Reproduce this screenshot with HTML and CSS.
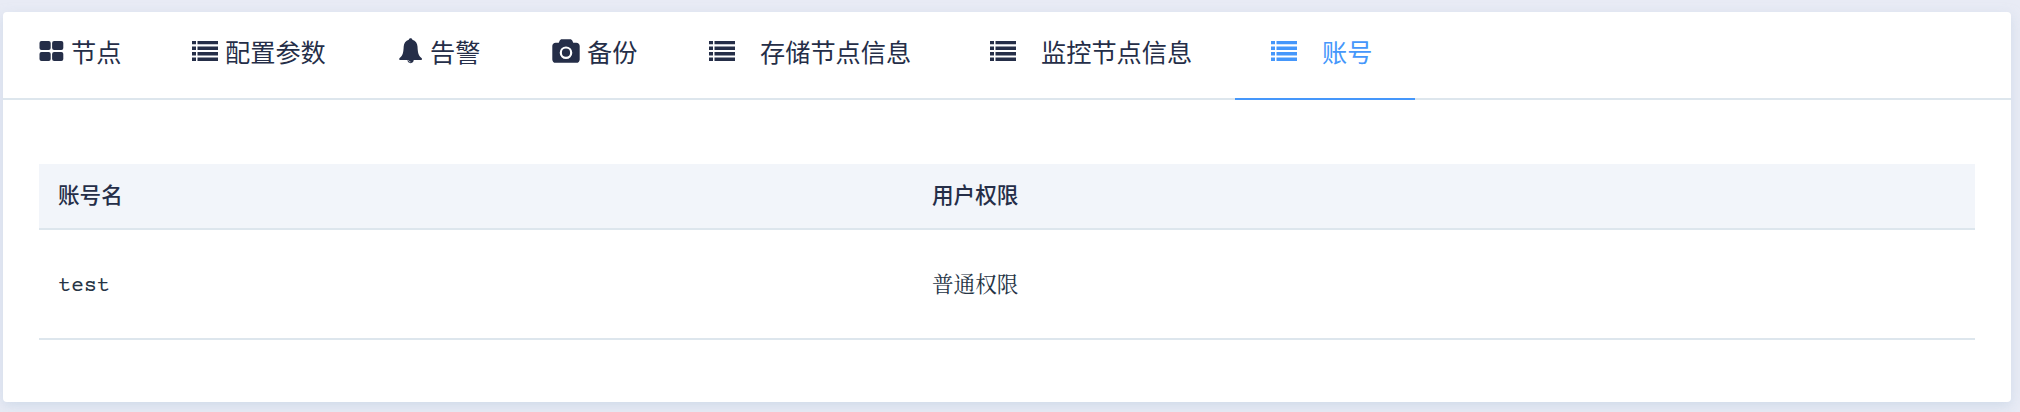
FILE: index.html
```html
<!DOCTYPE html>
<html lang="zh-CN">
<head>
<meta charset="utf-8">
<title>账号</title>
<link rel="stylesheet" href="styles.css">
</head>
<body>
<svg width="0" height="0" class="defs">
  <symbol id="list" viewBox="0 0 26 20">
    <path d="M0 0h4v3.3H0zM5.5 0H26v3.3H5.5zM0 5.4h4v3.5H0zM5.5 5.4H26v3.5H5.5zM0 11h4v3.4H0zM5.5 11H26v3.4H5.5zM0 16.4h4V20H0zM5.5 16.4H26V20H5.5z"/>
  </symbol>
</svg>
<main class="card">
  <nav class="tabs">
    <a class="tab tab-nodes">
      <svg class="icon" width="25" height="20" viewBox="0 0 25 20"><rect x=".5" width="11.2" height="9.1" rx="2"/><rect x="13.1" width="11.2" height="9.1" rx="2"/><rect x=".5" y="10.9" width="11.2" height="9.1" rx="2"/><rect x="13.1" y="10.9" width="11.2" height="9.1" rx="2"/></svg>
      <span>节点</span>
    </a>
    <a class="tab tab-config"><svg class="icon" width="26" height="20"><use href="#list"/></svg><span>配置参数</span></a>
    <a class="tab tab-alarm">
      <svg class="icon" width="24" height="26" viewBox="0.4 0 24 26"><path d="M12 .3c1 0 1.700.6 1.800 1.500 3.200.9 4.900 3.400 5.100 6.700.3 5.500.7 9.300 4 11.500.9.700.5 1.900-.5 1.900h-7.300c.1 1.900-1.200 3.300-3.100 3.300s-3.200-1.400-3.100-3.300H1.600c-1 0-1.400-1.200-.5-1.900 3.300-2.200 3.700-6 4-11.500.2-3.300 1.900-5.800 5.100-6.700C10.300.9 11 .3 12 .3z"/><path class="cut" d="M9.900 22.200c.1 1 .9 1.700 2 1.700"/></svg>
      <span>告警</span>
    </a>
    <a class="tab tab-backup">
      <svg class="icon" width="28" height="24" viewBox="0 0 28 24"><path fill-rule="evenodd" d="M10 .2h8c1.200 0 2 .6 2.400 1.600l.8 1.900h3.100c2 0 3.400 1.400 3.400 3.300v13.400c0 2-1.400 3.400-3.400 3.400H3.700c-2 0-3.400-1.400-3.400-3.400V7c0-1.900 1.400-3.300 3.400-3.300h3.100l.8-1.900C8 .8 8.800.2 10 .2zM14 7.400a6.300 6.300 0 1 0 0 12.600 6.300 6.300 0 0 0 0-12.600zm0 2.200a4.100 4.100 0 1 1 0 8.200 4.100 4.100 0 0 1 0-8.200z"/></svg>
      <span>备份</span>
    </a>
    <a class="tab tab-wide"><svg class="icon" width="26" height="20"><use href="#list"/></svg><span>存储节点信息</span></a>
    <a class="tab tab-wide"><svg class="icon" width="26" height="20"><use href="#list"/></svg><span>监控节点信息</span></a>
    <a class="tab tab-account active"><svg class="icon" width="26" height="20"><use href="#list"/></svg><span>账号</span></a>
  </nav>
  <section class="table">
    <div class="row head"><div>账号名</div><div>用户权限</div></div>
    <div class="row body"><div class="mono">test</div><div class="serif">普通权限</div></div>
  </section>
</main>
</body>
</html>
```
FILE: styles.css
```css
* {
  box-sizing: border-box;
}

body {
  margin: 0;
  padding: 12px 9px 10px 3px;
  height: 412px;
  overflow: hidden;
  background: #e8ebf5;
  color: #252e48;
  font-family: "Noto Sans CJK SC", sans-serif;
}

.defs {
  display: block;
}

.card {
  height: 390px;
  background: #fff;
  border-radius: 4px;
  box-shadow: 0 4px 12px rgba(190, 206, 224, 0.55);
}

.tabs {
  display: flex;
  height: 88px;
  border-bottom: 2px solid #dde6ed;
}

.tab {
  display: flex;
  align-items: center;
  gap: 7px;
  height: 88px;
  padding: 0 0 8px 36px;
  font-size: 25.2px;
  line-height: 36px;
  font-weight: 400;
  white-space: nowrap;
  border-bottom: 2px solid transparent;
}

.icon {
  display: block;
  flex: none;
  fill: currentColor;
}

.cut {
  fill: none;
  stroke: #fff;
  stroke-width: 0.7;
}

.tab-nodes {
  width: 153px;
}

.tab-config {
  width: 207px;
}

.tab-alarm {
  width: 153px;
}

.tab-backup {
  width: 157px;
}

.tab-wide {
  width: 281px;
  gap: 25px;
}

.tab-account {
  width: 180px;
  gap: 25px;
}

.active {
  color: #4597fb;
  border-bottom-color: #4597fb;
}

.table {
  margin: 64px 36px 0;
  font-size: 21.6px;
}

.row {
  display: grid;
  grid-template-columns: 874px 1fr;
  align-items: center;
  padding-left: 19px;
  border-bottom: 2px solid #dde6ed;
}

.head {
  height: 66px;
  padding-bottom: 6px;
  background: #f2f5fa;
  font-weight: 500;
}

.body {
  height: 110px;
  color: #263445;
}

.mono {
  padding-top: 3px;
  font-family: "Courier Prime", "Liberation Mono", monospace;
}

.serif {
  padding-bottom: 4px;
  font-family: "Noto Serif CJK SC", "Noto Sans CJK SC", serif;
  font-weight: 400;
}
```
